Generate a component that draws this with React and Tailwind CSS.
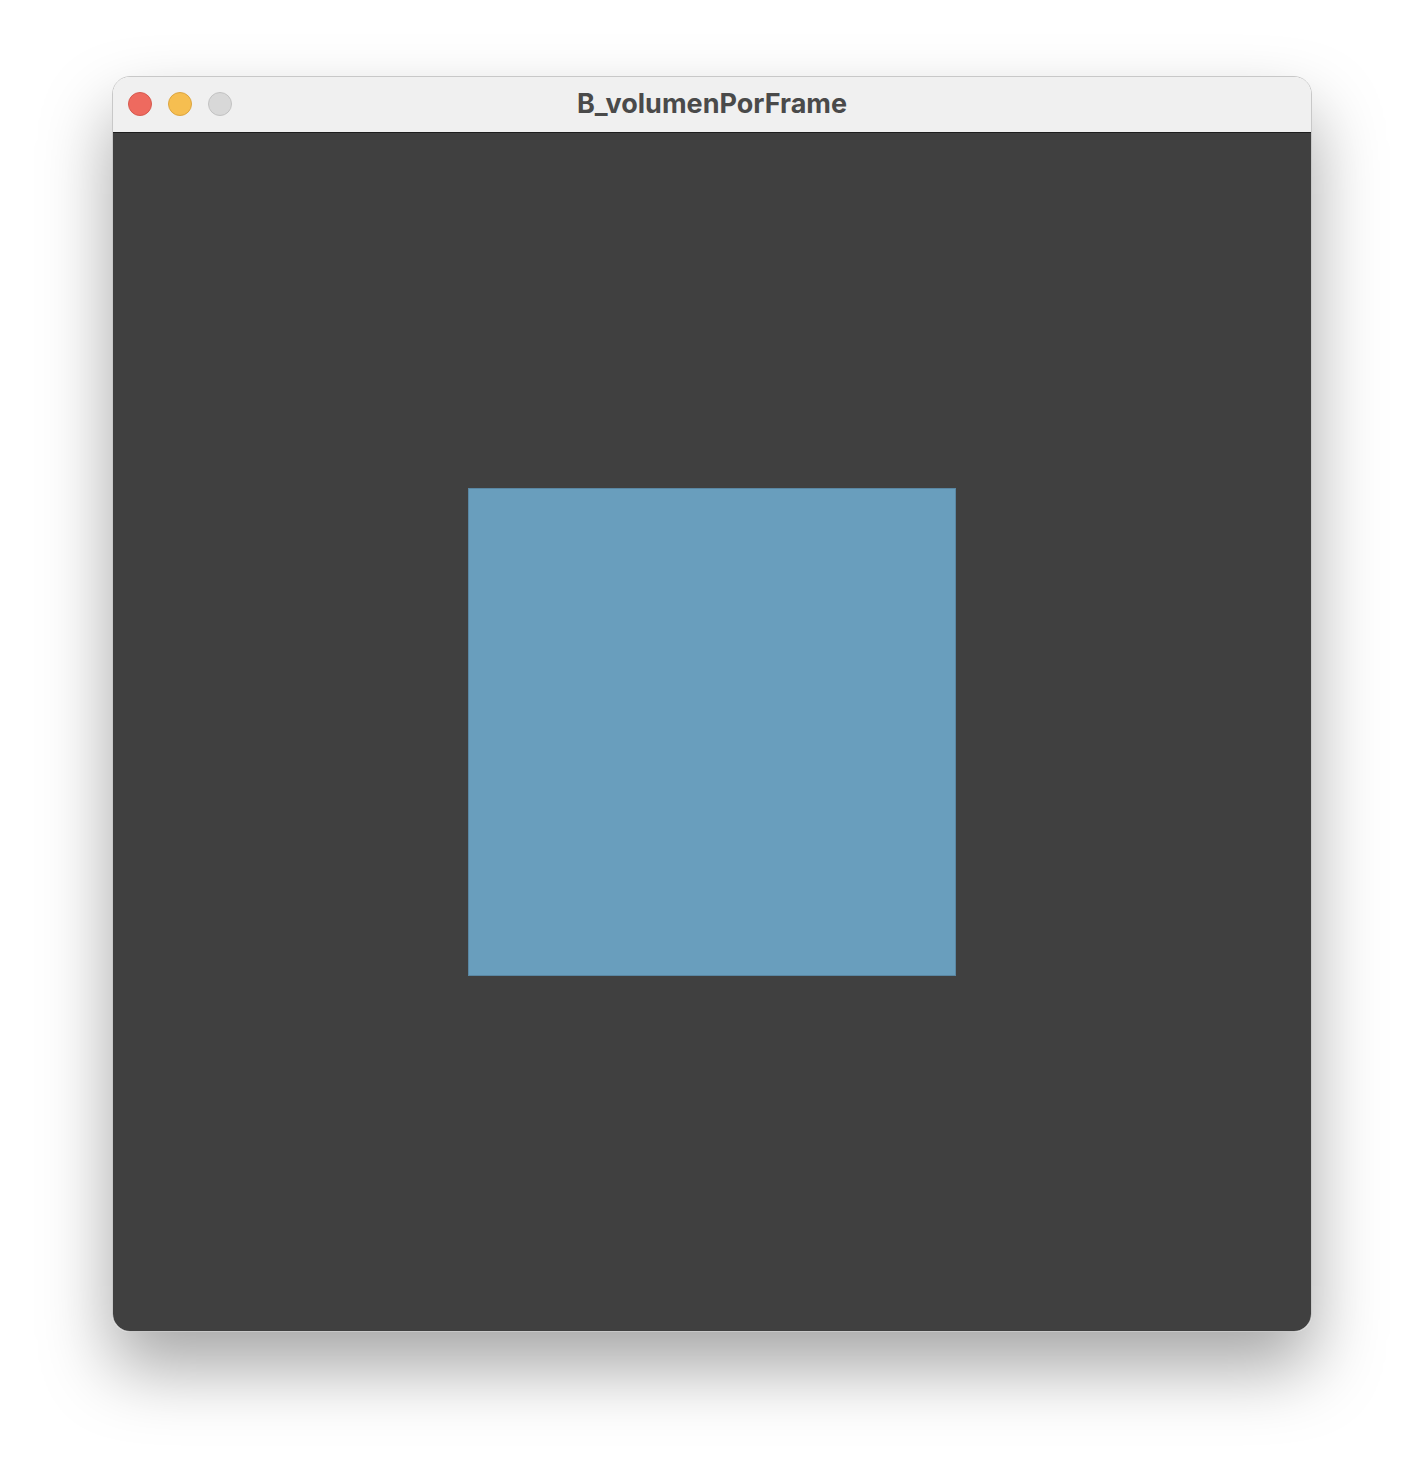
import React from 'react';

const App = () => {
  return (
    <div className="w-[1424px] h-[1480px] bg-white flex justify-center pt-[76px]" style={{ fontFamily: 'Inter, "Noto Sans", sans-serif' }}>
      {/* Window */}
      <div className="w-[1200px] h-[1256px] flex flex-col rounded-[18px] overflow-hidden border border-[#c8c8c8] shadow-[0_36px_70px_rgba(0,0,0,0.35)]">
        {/* Title bar */}
        <div className="relative h-[56px] bg-[#f0f0f0] flex items-center justify-center border-b border-[#1e1e1e]">
          <div className="absolute left-[15px] top-[15px] flex gap-4">
            <div className="w-6 h-6 rounded-full bg-[#ee6a5f] border border-[#d65a4f]" />
            <div className="w-6 h-6 rounded-full bg-[#f6be50] border border-[#dca540]" />
            <div className="w-6 h-6 rounded-full bg-[#d8d8d8] border border-[#c2c2c2]" />
          </div>
          <h1 className="text-[27px] leading-none font-bold text-[#4a4a4a] -mt-[2px]">B_volumenPorFrame</h1>
        </div>

        {/* Canvas */}
        <div className="flex-1 bg-[#404040] flex items-center justify-center">
          <div className="w-[488px] h-[488px] bg-[#699ebd] border border-[#5a87a3]" />
        </div>
      </div>
    </div>
  );
};

export default App;
